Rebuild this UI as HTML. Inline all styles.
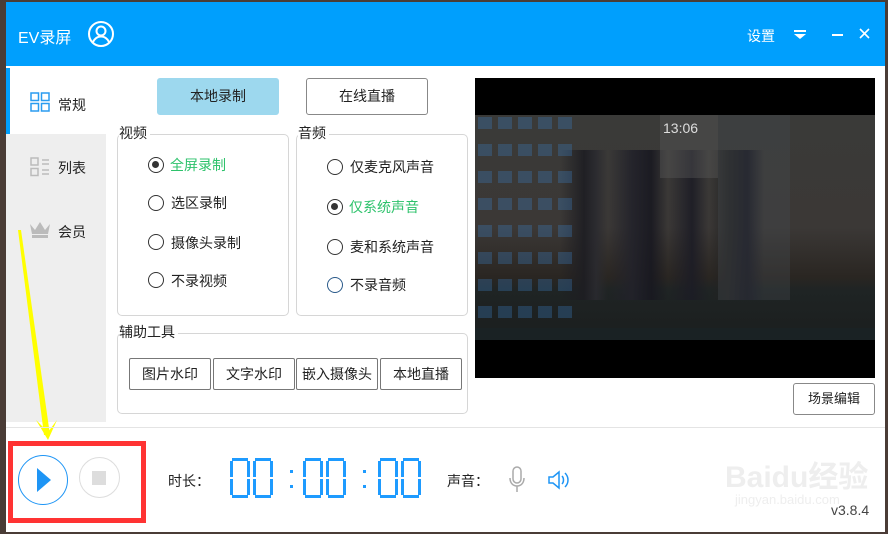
<!DOCTYPE html>
<html><head><meta charset="utf-8"><style>
*{margin:0;padding:0;box-sizing:border-box}
body{width:888px;height:534px;overflow:hidden;background:#4a3c36;font-family:"Liberation Sans","Noto Sans CJK SC",sans-serif;font-size:13px;color:#222;position:relative}
.a{position:absolute}
.win{left:6px;top:2px;width:879px;height:530px;background:#fff}
.hdr{left:6px;top:2px;width:879px;height:64px;background:#009ffd;color:#fff}
.btn{position:absolute;border:1px solid #888;border-radius:3px;background:#fff;text-align:center;font-size:14px}
.box{position:absolute;border:1px solid #d6d6d6;border-radius:5px}
.lg{position:absolute;background:#fff;padding-right:3px;font-size:14px;line-height:18px}
.r{position:absolute;width:16px;height:16px;border:1.5px solid #333;border-radius:50%}
.r.on::after{content:"";position:absolute;left:3px;top:3px;width:7px;height:7px;border-radius:50%;background:#333}
.rt{position:absolute;font-size:14px;line-height:18px;margin-top:-1px}
.tb{position:absolute;top:358px;height:32px;border:1px solid #777;border-radius:2px;text-align:center;line-height:30px;font-size:14px;background:#fff}
</style></head><body>
<div class="a win"></div>
<div class="a hdr">
 <div class="a" style="left:12px;top:22px;font-size:16px">EV录屏</div>
 <svg class="a" style="left:81px;top:18px" width="28" height="28" viewBox="0 0 28 28" fill="none" stroke="#fff" stroke-width="2"><circle cx="14" cy="14" r="12"/><circle cx="14" cy="11" r="4.5"/><path d="M6 22c2-4 5-5.5 8-5.5s6 1.5 8 5.5"/></svg>
 <div class="a" style="left:741px;top:24px;font-size:14px">设置</div>
 <svg class="a" style="left:788px;top:28px" width="12" height="10"><rect x="0" y="0" width="12" height="2" fill="#fff"/><path d="M0 4h12L6 9z" fill="#fff"/></svg>
 <div class="a" style="left:826px;top:32px;width:11px;height:2px;background:#fff"></div>
 <svg class="a" style="left:853px;top:26px" width="11" height="11" stroke="#fff" stroke-width="1.6"><path d="M1 1l9 9M10 1l-9 9"/></svg>
</div>
<div class="a" style="left:6px;top:134px;width:100px;height:288px;background:#eeeeee"></div>
<div class="a" style="left:6px;top:68px;width:4px;height:66px;background:#009ffd"></div>
<svg class="a" style="left:30px;top:92px" width="20" height="20" fill="none" stroke="#2a9cf0" stroke-width="1.5"><rect x="1" y="1" width="7.5" height="7.5"/><rect x="11.5" y="1" width="7.5" height="7.5"/><rect x="1" y="11.5" width="7.5" height="7.5"/><rect x="11.5" y="11.5" width="7.5" height="7.5"/></svg>
<div class="a" style="left:58px;top:95px;font-size:14px">常规</div>
<svg class="a" style="left:30px;top:157px" width="20" height="20" fill="none" stroke="#bbb" stroke-width="1.5"><rect x="1" y="1" width="7" height="7"/><rect x="1" y="11.5" width="7" height="7"/><path d="M12 3h7M12 7h7M12 13h7M12 17h7"/></svg>
<div class="a" style="left:58px;top:158px;font-size:14px">列表</div>
<svg class="a" style="left:29px;top:221px" width="22" height="18"><path d="M1 3l5 6 5-8 5 8 5-6-2 10H3z" fill="#bbb"/><rect x="3" y="14" width="16" height="3" fill="#bbb"/></svg>
<div class="a" style="left:58px;top:222px;font-size:14px">会员</div>
<svg class="a" style="left:0;top:110px" width="120" height="340"><path d="M18 120 L44 325 L50 325 L21 120z" fill="#ffff00"/><path d="M36 310 L48 330 L57 310 L48 322z" fill="#ffff00"/></svg>
<div class="btn" style="left:157px;top:78px;width:122px;height:37px;background:#9dd8ee;border-color:#9dd8ee;line-height:35px">本地录制</div>
<div class="btn" style="left:306px;top:78px;width:122px;height:37px;line-height:35px">在线直播</div>
<div class="box" style="left:117px;top:134px;width:172px;height:182px"></div>
<div class="lg" style="left:119px;top:124px">视频</div>
<div class="r on" style="left:148px;top:157px"></div><div class="rt" style="left:170px;top:157px;color:#2dc26b">全屏录制</div>
<div class="r" style="left:148px;top:195px"></div><div class="rt" style="left:171px;top:195px">选区录制</div>
<div class="r" style="left:148px;top:234px"></div><div class="rt" style="left:171px;top:235px">摄像头录制</div>
<div class="r" style="left:148px;top:272px"></div><div class="rt" style="left:171px;top:273px">不录视频</div>
<div class="box" style="left:296px;top:134px;width:172px;height:182px"></div>
<div class="lg" style="left:298px;top:124px">音频</div>
<div class="r" style="left:327px;top:159px"></div><div class="rt" style="left:350px;top:159px">仅麦克风声音</div>
<div class="r on" style="left:327px;top:199px"></div><div class="rt" style="left:349px;top:199px;color:#2dc26b">仅系统声音</div>
<div class="r" style="left:327px;top:239px"></div><div class="rt" style="left:350px;top:239px">麦和系统声音</div>
<div class="r" style="left:327px;top:277px;border-color:#2a5a8a"></div><div class="rt" style="left:350px;top:277px">不录音频</div>
<div class="box" style="left:117px;top:333px;width:351px;height:81px"></div>
<div class="lg" style="left:119px;top:323px">辅助工具</div>
<div class="tb" style="left:129px;width:82px">图片水印</div>
<div class="tb" style="left:213px;width:82px">文字水印</div>
<div class="tb" style="left:296px;width:82px">嵌入摄像头</div>
<div class="tb" style="left:380px;width:82px">本地直播</div>
<div class="a" style="left:475px;top:78px;width:400px;height:300px;background:#000"></div>
<div class="a" style="left:475px;top:115px;width:400px;height:225px;background:linear-gradient(180deg,#3a3a38 0%,#3b3836 50%,#2a2622 72%,#1f2424 78%,#1b1e1e 100%)"></div>
<div class="a" style="left:560px;top:150px;width:240px;height:150px;background:linear-gradient(90deg,transparent 0,#1d1d22 10%,#2a2a2f 15%,transparent 20%,#22222a 30%,#181820 38%,transparent 45%,#1c1c25 55%,transparent 62%,#222 70%,#151520 78%,transparent 85%);opacity:.9"></div>
<div class="a" style="left:660px;top:115px;width:58px;height:63px;background:rgba(90,90,90,.4)"></div>
<div class="a" style="left:718px;top:115px;width:72px;height:185px;background:rgba(70,75,80,.35)"></div>
<div class="a" style="left:663px;top:120px;color:#ddd;font-size:14px">13:06</div>
<div class="a" style="left:478px;top:115px;width:100px;height:205px;opacity:.6;background:repeating-linear-gradient(180deg,transparent 0,transparent 2px,rgba(60,130,200,.5) 2px,rgba(60,130,200,.5) 14px,transparent 14px,transparent 27px);-webkit-mask:repeating-linear-gradient(90deg,#000 0,#000 14px,transparent 14px,transparent 20px)"></div>
<div class="a" style="left:475px;top:328px;width:400px;height:12px;background:#1a2224"></div>
<div class="btn" style="left:793px;top:383px;width:82px;height:32px;line-height:30px;font-size:13px">场景编辑</div>
<div class="a" style="left:6px;top:427px;width:879px;height:1px;background:#e4e4e4"></div>
<div class="a" style="left:8px;top:441px;width:138px;height:82px;border:5px solid #f33"></div>
<div class="a" style="left:18px;top:455px;width:50px;height:50px;border:1.5px solid #1e95f5;border-radius:50%"></div>
<svg class="a" style="left:36px;top:467px" width="16" height="26"><path d="M1 1L15 13L1 25z" fill="#1e95f5"/></svg>
<div class="a" style="left:79px;top:457px;width:41px;height:41px;border:1.5px solid #ddd;border-radius:50%"></div>
<div class="a" style="left:92px;top:471px;width:14px;height:14px;background:#ddd"></div>
<div class="a" style="left:168px;top:471px;font-size:14px">时长：</div>
<svg class="a" style="left:230px;top:458px" width="200" height="42" fill="#1e9bff">
<g id="z"><rect x="2" y="0" width="16" height="3"/><rect x="2" y="37" width="16" height="3"/><rect x="0" y="3" width="3" height="16"/><rect x="0" y="21" width="3" height="16"/><rect x="17" y="3" width="3" height="16"/><rect x="17" y="21" width="3" height="16"/></g>
<use href="#z" x="23"/><use href="#z" x="73"/><use href="#z" x="96"/><use href="#z" x="148"/><use href="#z" x="171"/>
<rect x="60" y="12" width="3" height="3"/><rect x="60" y="27" width="3" height="3"/><rect x="133" y="12" width="3" height="3"/><rect x="133" y="27" width="3" height="3"/>
</svg>
<div class="a" style="left:447px;top:471px;font-size:14px">声音：</div>
<svg class="a" style="left:508px;top:466px" width="18" height="28" fill="none" stroke="#aaa" stroke-width="1.5"><rect x="5" y="1" width="8" height="16" rx="4"/><path d="M2 12c0 5 3 8 7 8s7-3 7-8M9 20v6"/></svg>
<svg class="a" style="left:548px;top:470px" width="22" height="20" fill="none" stroke="#1e95f5" stroke-width="1.5"><path d="M1 7h4l6-5v16l-6-5H1z"/><path d="M14 6c2 2 2 6 0 8M17 3c4 4 4 10 0 14"/></svg>
<div class="a" style="left:725px;top:452px;font-size:30px;color:#eeeeee;font-weight:bold">Baidu经验</div>
<div class="a" style="left:735px;top:492px;font-size:13px;color:#eeeeee">jingyan.baidu.com</div>
<div class="a" style="left:831px;top:502px;font-size:14px;color:#444">v3.8.4</div>
</body></html>
